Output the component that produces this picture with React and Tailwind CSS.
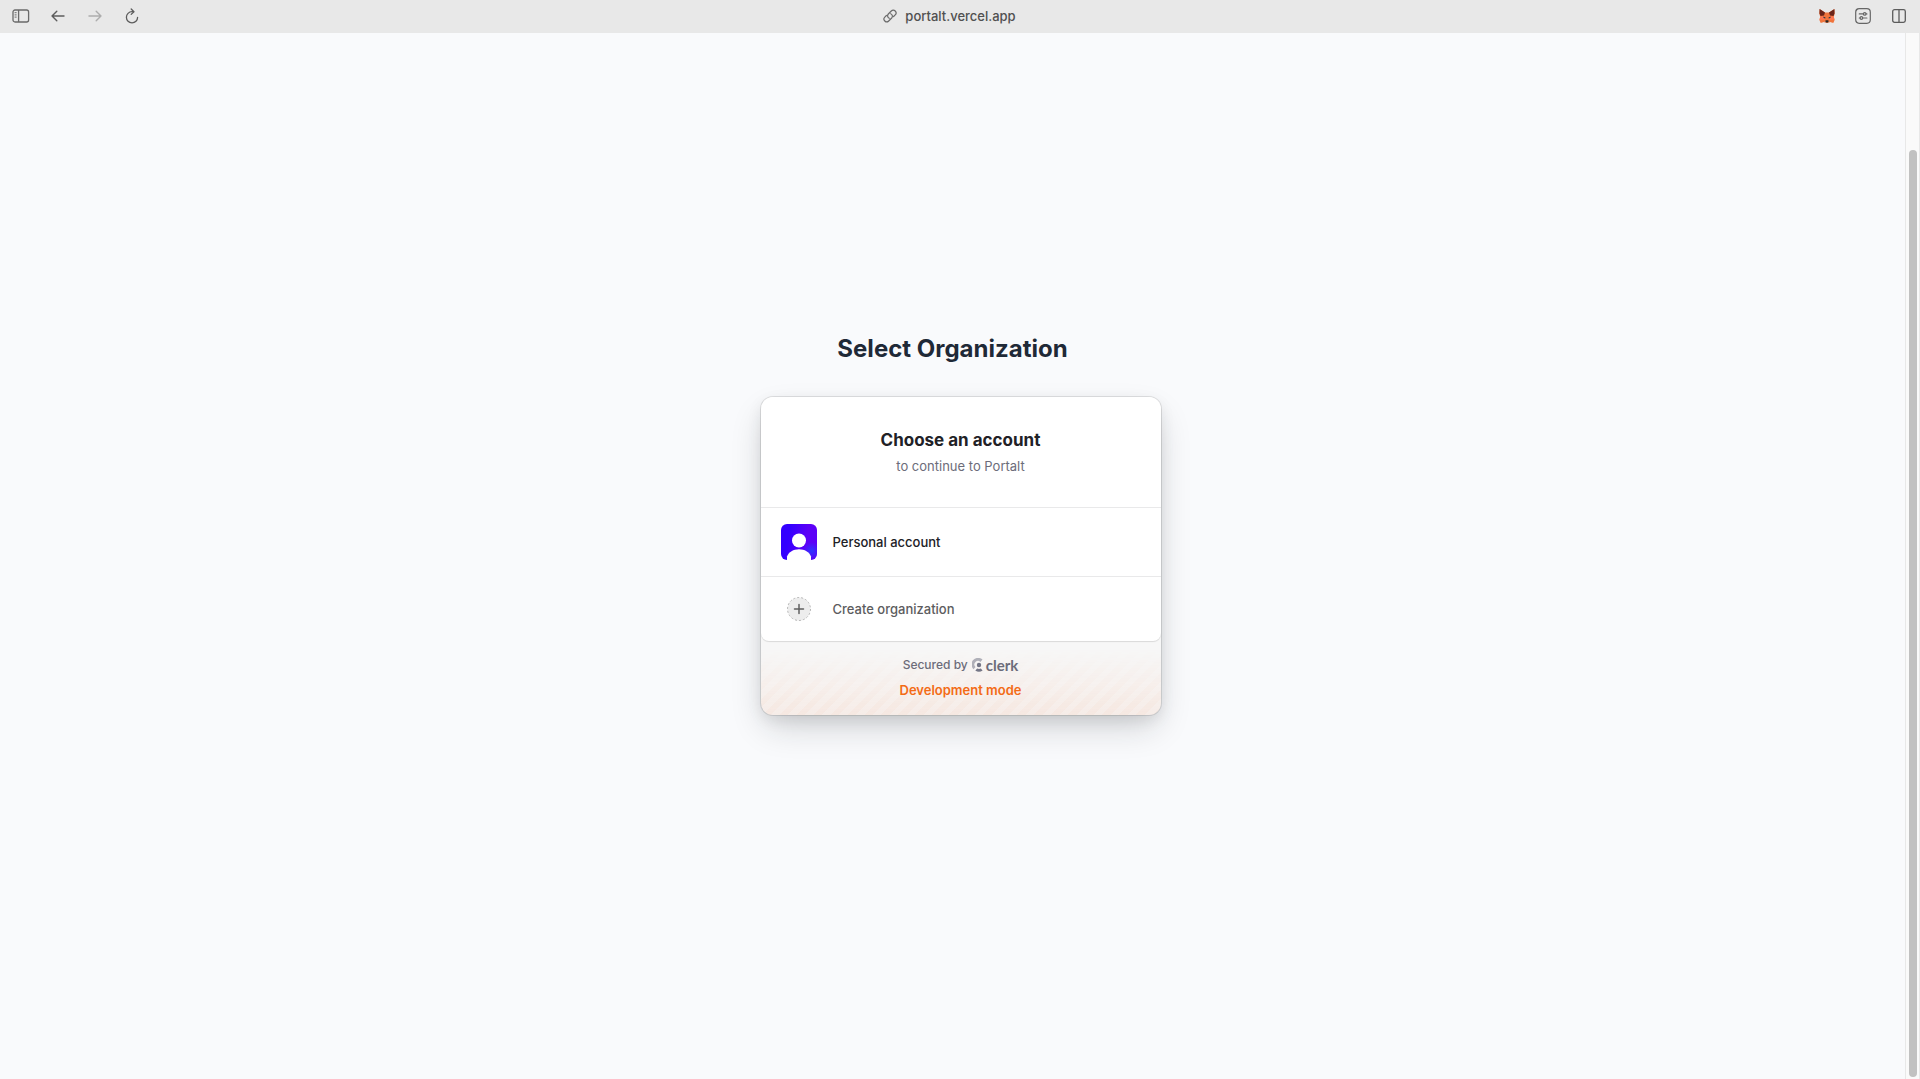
import React from "react";

function SidebarIcon() {
  return (
    <svg width="18" height="14" viewBox="0 0 18 14" fill="none" stroke="#6a6a6a" strokeWidth="1.3">
      <rect x="1" y="1" width="15.6" height="12" rx="2" />
      <path d="M6.6 1v12" />
      <path d="M2.6 3.7h2M2.6 5.9h2M2.6 8.1h2" strokeWidth="1" />
    </svg>
  );
}

function ArrowIcon({ forward }) {
  return (
    <svg width="14" height="12" viewBox="0 0 14 12" fill="none" stroke={forward ? "#adadad" : "#5c5c5c"} strokeWidth="1.4" strokeLinecap="round" strokeLinejoin="round">
      {forward ? <path d="M1 6h12M8.2 1.2 13 6l-4.8 4.8" /> : <path d="M13 6H1M5.8 1.2 1 6l4.8 4.8" />}
    </svg>
  );
}

function ReloadIcon() {
  return (
    <svg width="14" height="16" viewBox="0 0 14 16" fill="none" stroke="#5c5c5c" strokeWidth="1.3" strokeLinecap="round" strokeLinejoin="round">
      <path d="M12.6 9.3A5.6 5.6 0 1 1 7 3.7h1.6" />
      <path d="M6.2 1 8.9 3.7 6.2 6.4" />
    </svg>
  );
}

function LinkIcon() {
  return (
    <svg width="14" height="14" viewBox="0 0 14 14" fill="none" stroke="#6a6a6a" strokeWidth="1.2" strokeLinecap="round" strokeLinejoin="round">
      <path d="M6.3 9.3A2.7 2.7 0 0 1 5.3 5L8.3 2A2.75 2.75 0 0 1 12.2 5.9L10.6 7.5" />
      <path d="M7.7 4.7A2.7 2.7 0 0 1 8.7 9L5.7 12A2.75 2.75 0 0 1 1.8 8.1L3.4 6.5" />
    </svg>
  );
}

function FoxIcon() {
  return (
    <svg width="16" height="16" viewBox="0 0 16 16">
      <path d="M.6 1 6 4.400h4L15.400 1l.3 4.600-.9 3.200.8 3.200-1.300 3-3.300-1-1.600 1H6.600L5 14l-3.300 1-1.300-3 .8-3.200L.3 5.600z" fill="#f0743c" />
      <path d="M.6 1 6 4.600 5 7.400 1.500 8 .5 5.500zM15.400 1 10 4.600l1 2.800 3.500.6 1-2.500z" fill="#6b2419" />
      <path d="M1.200 8.800 5 8l1 4-5.400-.2zM14.800 8.800 11 8l-1 4 5.400-.2z" fill="#ff7650" />
      <path d="m4.300 8.500 2.200 1-.3.900-1.600-.3zM11.700 8.500l-2.200 1 .3.900 1.600-.3z" fill="#263447" />
      <path d="M6.600 12.300h2.800l.3 1.700-.7.500H7l-.7-.5z" fill="#2b2420" />
      <path d="m5 14 1.300-.5.400 1L6.600 15zM11 14l-1.300-.5-.4 1 .1.500z" fill="#d6c0b3" />
    </svg>
  );
}

function SettingsIcon() {
  return (
    <svg width="16" height="16" viewBox="0 0 16 16" fill="none" stroke="#666" strokeWidth="1.2" strokeLinecap="round">
      <rect x=".7" y=".7" width="14.6" height="14.6" rx="3.5" />
      <path d="M4.300 5.900h4M11.200 5.900h.7M4.300 10h.7M8 10h3.900" />
      <circle cx="9.7" cy="5.9" r="1.3" />
      <circle cx="6.4" cy="10" r="1.3" />
    </svg>
  );
}

function SplitIcon() {
  return (
    <svg width="14" height="14" viewBox="0 0 14 14" fill="none" stroke="#5c5c5c" strokeWidth="1.3">
      <rect x=".7" y=".7" width="12.6" height="12.6" rx="1.8" />
      <path d="M7 .7v12.6" />
    </svg>
  );
}

function Avatar() {
  return (
    <svg className="size-9 rounded-md" viewBox="0 0 36 36">
      <defs>
        <linearGradient id="avatar-base" x1="0" x2="1" y1=".3" y2=".5">
          <stop offset=".2" stopColor="#3300ff" />
          <stop offset=".7" stopColor="#5c00f7" />
        </linearGradient>
        <radialGradient id="avatar-glow" cx=".85" cy=".75" r=".25">
          <stop stopColor="#2f35ff" />
          <stop offset="1" stopColor="#2f35ff" stopOpacity="0" />
        </radialGradient>
      </defs>
      <path d="M0 0h36v36H0z" fill="url(#avatar-base)" />
      <path d="M0 0h36v36H0z" fill="url(#avatar-glow)" />
      <circle cx="18" cy="16.5" r="7" fill="#fff" />
      <path d="M6 36v-3.500C7.600 28 12.500 25.200 18 25.200S28.400 28 30 32.500V36z" fill="#fff" />
    </svg>
  );
}

function PlusIcon() {
  return (
    <svg className="mx-[6px] size-6" viewBox="0 0 24 24" fill="none">
      <circle cx="12" cy="12" r="11.5" fill="#ededed" stroke="#b7b7b7" strokeDasharray="2 2" />
      <path d="M12 7.500v9M7.500 12h9" stroke="#5f5f5f" strokeWidth="1.5" strokeLinecap="round" />
    </svg>
  );
}

function ClerkMark() {
  return (
    <svg width="11" height="14" viewBox="0 0 11 14">
      <path d="M10.5 1.6 8.4 4A3.5 3.5 0 0 0 3.5 9L1.6 11.3A6.5 6.5 0 0 1 10.5 1.600Z" fill="#747686" fillOpacity=".55" />
      <circle cx="7" cy="7" r="2.2" fill="#747686" />
      <path d="M10.6 12.5 8.8 10.500a4 4 0 0 1-3.600 0l-1.900 2a6.600 6.600 0 0 0 7.300 0z" fill="#747686" />
    </svg>
  );
}

function BrowserBar() {
  return (
    <header className="grid h-[33px] shrink-0 grid-cols-[1fr_auto_1fr] items-center bg-[#e8e8e8] pr-[3px] pl-[2px] pb-0.5">
      <nav className="flex items-center *:flex *:w-[37px] *:justify-center" aria-label="Browser">
        <button aria-label="Show sidebar"><SidebarIcon /></button>
        <button aria-label="Back"><ArrowIcon /></button>
        <button aria-label="Forward" disabled><ArrowIcon forward /></button>
        <button aria-label="Reload"><ReloadIcon /></button>
      </nav>
      <button className="mr-5 flex items-center gap-2 text-[13px] leading-5 font-medium text-[#505050]">
        <LinkIcon />
        portalt.vercel.app
      </button>
      <div className="flex items-center justify-end *:flex *:w-9 *:justify-center">
        <button aria-label="Wallet"><FoxIcon /></button>
        <button aria-label="Page settings"><SettingsIcon /></button>
        <button aria-label="Split view"><SplitIcon /></button>
      </div>
    </header>
  );
}

function AccountCard() {
  return (
    <section className="w-[400px] rounded-xl bg-[#f7f7f7] shadow-[0_0_0_1px_rgba(0,0,0,0.1),0_5px_15px_0_rgba(0,0,0,0.08),0_15px_35px_-5px_rgba(25,28,33,0.2)]">
      <div className="relative overflow-hidden rounded-t-xl rounded-b-lg bg-white shadow-[0_1px_1px_0_rgba(0,0,0,0.12)]">
        <div className="flex flex-col items-center gap-1.5 px-5 py-8 text-center">
          <h2 className="text-[17px] leading-[22px] font-bold text-[#212126]">Choose an account</h2>
          <p className="text-[13px] leading-[18px] text-[#6c6c7a]">to continue to Portalt</p>
        </div>
        <button className="flex w-full items-center gap-4 border-t border-[#e9e9ea] px-5 py-4 text-left text-[13px] leading-5 font-medium text-[#212126]">
          <Avatar />
          Personal account
        </button>
        <button className="flex w-full items-center gap-4 border-t border-[#e9e9ea] px-5 py-5 text-left text-[13px] leading-5 font-medium text-[#5c5c5e]">
          <PlusIcon />
          Create organization
        </button>
      </div>
      <footer className="relative flex flex-col items-center gap-2 overflow-hidden rounded-b-xl px-8 py-4">
        <div className="absolute inset-0 bg-[repeating-linear-gradient(-45deg,rgba(243,107,40,0.1)_0px,rgba(243,107,40,0.1)_6px,rgba(243,107,40,0.07)_6px,rgba(243,107,40,0.07)_12px)] [mask-image:linear-gradient(transparent_10%,black)]" />
        <p className="relative flex items-center gap-1 text-xs leading-4 font-medium text-[#6c6c7a]">
          Secured by
          <a href="#clerk" className="flex items-center gap-[3px] font-['Lato',sans-serif] text-[15px] leading-4 font-bold">
            <ClerkMark />
            clerk
          </a>
        </p>
        <p className="relative text-[13px] leading-[18px] font-semibold text-[#f36b16]">Development mode</p>
      </footer>
    </section>
  );
}

export default function App() {
  return (
    <div className="flex min-h-screen flex-col bg-[#f9fafc] font-['Inter',sans-serif]">
      <BrowserBar />
      <div className="flex grow">
        <main className="flex grow flex-col items-center justify-center pb-16">
          <div className="w-96">
            <h1 className="mb-8 text-center text-2xl font-bold text-[#1f2937]">Select Organization</h1>
            <AccountCard />
          </div>
        </main>
        <div className="flex w-[15px] flex-col border-x border-[#e8e8e8] bg-[#fafafa] px-[3px] pt-[117px] pb-[2px]">
          <div className="w-2 grow rounded-full bg-[#c1c1c1]" />
        </div>
      </div>
    </div>
  );
}
